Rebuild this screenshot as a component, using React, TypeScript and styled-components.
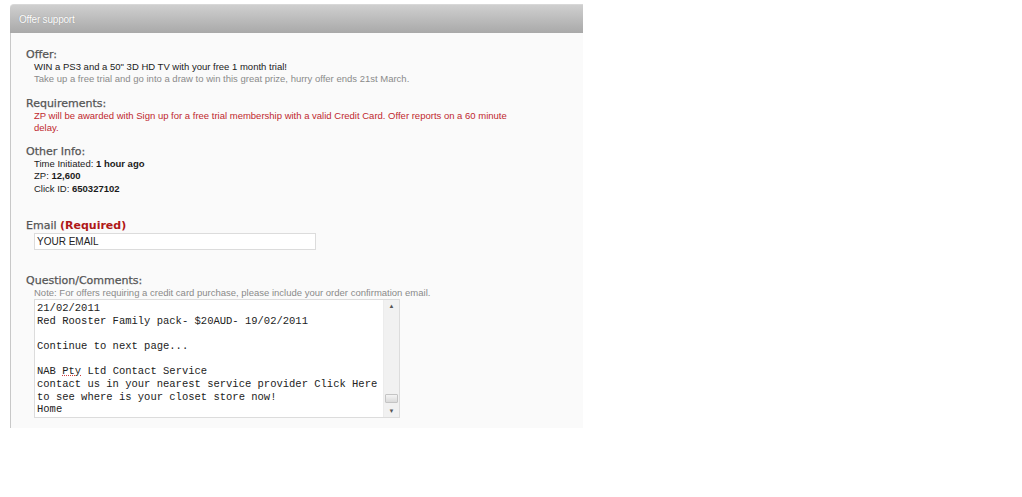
import styled, { createGlobalStyle } from "styled-components";

const GlobalStyle = createGlobalStyle`
  body {
    margin: 0;
    background: #ffffff;
    font-family: "Liberation Sans", Arial, sans-serif;
  }
`;

const Panel = styled.div`
  width: 573px;
  margin: 4px 0 0 10px;
`;

const PanelHeader = styled.div`
  height: 28px;
  display: flex;
  align-items: center;
  padding-left: 9px;
  border-radius: 4px 0 0 0;
  border-top: 1px solid #d8d8d8;
  background: linear-gradient(#cfcfcf, #a9a9a9);
  color: #ffffff;
  font-size: 10px;
  letter-spacing: -0.2px;
  text-shadow: 0 0 1px #888;
`;

const PanelBody = styled.div`
  height: 379px;
  padding: 16px 0 0 15px;
  border-left: 1px solid #c8c8c8;
  background: #fafafa;
`;

const Section = styled.div<{ $gap?: number }>`
  margin-bottom: ${(p) => p.$gap ?? 12}px;
`;

const Heading = styled.div`
  font-family: "DejaVu Sans", Verdana, sans-serif;
  font-size: 11px;
  line-height: 12px;
  color: #555;
  -webkit-text-stroke: 0.25px #555;
`;

const Required = styled.span`
  color: #b01818;
  font-weight: bold;
  -webkit-text-stroke: 0;
`;

const Line = styled.div<{ $tone?: "dark" | "muted" | "red" }>`
  padding-left: 8px;
  font-size: 9.5px;
  line-height: 12.3px;
  color: ${(p) => (p.$tone === "muted" ? "#8a8a8a" : p.$tone === "red" ? "#c0282e" : "#1a1a1a")};
  max-width: 482px;
`;

const EmailInput = styled.div`
  margin: 1px 0 0 8px;
  width: 278px;
  height: 15px;
  border: 1px solid #dcdcdc;
  background: #fff;
  padding-left: 2px;
  font-size: 10px;
  line-height: 15px;
  color: #222;
`;

const TextBox = styled.div`
  margin: 0 0 0 8px;
  width: 364px;
  height: 117px;
  display: flex;
  border: 1px solid #dcdcdc;
  background: #fff;
`;

const BoxText = styled.pre`
  flex: 1;
  margin: 0;
  padding: 2px 0 0 2px;
  font-family: "Liberation Mono", "Courier New", monospace;
  font-size: 10.5px;
  line-height: 12.6px;
  color: #222;
  overflow: hidden;
`;

const ScrollTrack = styled.div`
  width: 15px;
  display: flex;
  flex-direction: column;
  align-items: center;
  background: #f1f1f1;
  border-left: 1px solid #ececec;
`;

const ScrollArrow = styled.div`
  height: 12px;
  font-size: 6px;
  line-height: 12px;
  color: #555;
`;

const ScrollSpace = styled.div`
  flex: 1;
`;

const ScrollThumb = styled.div`
  width: 11px;
  height: 7px;
  border: 1px solid #c4c4c4;
  border-radius: 1px;
  background: linear-gradient(#f4f4f4, #dadada);
  margin-bottom: 2px;
`;

const Typo = styled.span`
  text-decoration: underline dotted #d04040;
  text-underline-offset: 1px;
`;

export default function App() {
  return (
    <>
      <GlobalStyle />
      <Panel>
        <PanelHeader>Offer support</PanelHeader>
        <PanelBody>
          <Section>
            <Heading>Offer:</Heading>
            <Line>WIN a PS3 and a 50" 3D HD TV with your free 1 month trial!</Line>
            <Line $tone="muted">
              Take up a free trial and go into a draw to win this great prize, hurry offer ends 21st March.
            </Line>
          </Section>
          <Section>
            <Heading>Requirements:</Heading>
            <Line $tone="red">
              ZP will be awarded with Sign up for a free trial membership with a valid Credit Card. Offer reports on a 60 minute
              delay.
            </Line>
          </Section>
          <Section $gap={25}>
            <Heading>Other Info:</Heading>
            <Line>
              Time Initiated: <b>1 hour ago</b>
            </Line>
            <Line>
              ZP: <b>12,600</b>
            </Line>
            <Line>
              Click ID: <b>650327102</b>
            </Line>
          </Section>
          <Section $gap={25}>
            <Heading>
              Email <Required>(Required)</Required>
            </Heading>
            <EmailInput>YOUR EMAIL</EmailInput>
          </Section>
          <Section>
            <Heading>Question/Comments:</Heading>
            <Line $tone="muted">
              Note: For offers requiring a credit card purchase, please include your order confirmation email.
            </Line>
            <TextBox>
              <BoxText>
                {"21/02/2011\nRed Rooster Family pack- $20AUD- 19/02/2011\n\nContinue to next page...\n\nNAB "}
                <Typo>Pty</Typo>
                {" Ltd Contact Service\ncontact us in your nearest service provider Click Here\nto see where is your closet store now!\nHome"}
              </BoxText>
              <ScrollTrack>
                <ScrollArrow>▲</ScrollArrow>
                <ScrollSpace />
                <ScrollThumb />
                <ScrollArrow>▼</ScrollArrow>
              </ScrollTrack>
            </TextBox>
          </Section>
        </PanelBody>
      </Panel>
    </>
  );
}
